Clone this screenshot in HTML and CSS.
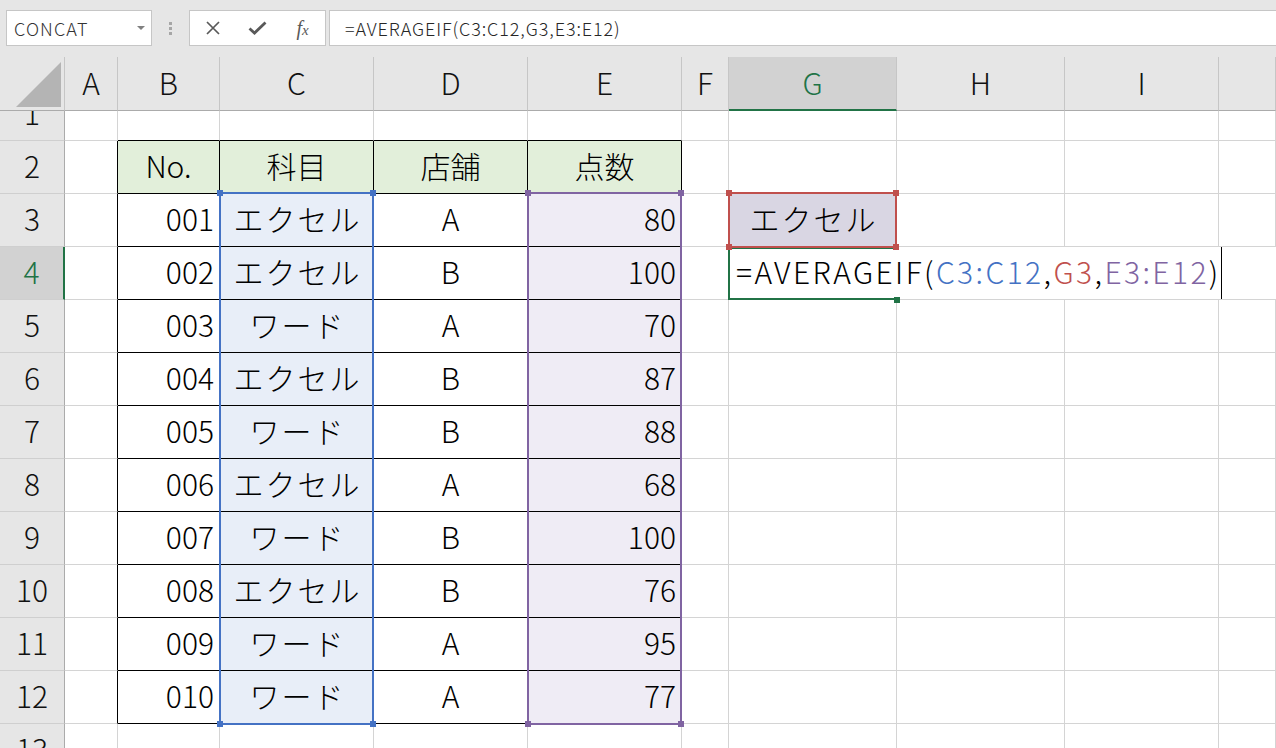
FILE: index.html
```html
<!DOCTYPE html>
<html lang="ja">
<head>
<meta charset="utf-8">
<title>AVERAGEIF</title>
<link rel="stylesheet" href="styles.css">
</head>
<body>
<div class="topbar">
  <div class="namebox"><span>CONCAT</span><i class="arrow"></i></div>
  <div class="grip"><i></i><i></i><i></i></div>
  <div class="fbtns">
    <div class="fbtn"><svg width="16" height="16" viewBox="0 0 16 16"><path d="M2 2L14 14M14 2L2 14" stroke="#595959" stroke-width="1.7" fill="none"/></svg></div>
    <div class="fbtn"><svg width="19" height="14" viewBox="0 0 19 14"><path d="M1.5 7.5L6.5 12L17.5 1.5" stroke="#595959" stroke-width="2.8" fill="none"/></svg></div>
    <div class="fbtn fx"><span class="ff">f</span><span class="fxx">x</span></div>
  </div>
  <div class="finput">=AVERAGEIF(C3:C12,G3,E3:E12)</div>
</div>

<div class="colhdr">
  <div class="ch corner"><svg width="64" height="53" viewBox="0 0 64 53"><polygon points="16,50 61,50 61,5" fill="#b4b4b4"/></svg></div>
  <div class="ch">A</div>
  <div class="ch">B</div>
  <div class="ch">C</div>
  <div class="ch">D</div>
  <div class="ch">E</div>
  <div class="ch">F</div>
  <div class="ch sel">G</div>
  <div class="ch">H</div>
  <div class="ch">I</div>
  <div class="ch"></div>
</div>

<div class="sheet">
  <div class="rows">
    <div class="row">
      <div class="c rh">1</div><div class="c"></div><div class="c tt"></div><div class="c tt"></div><div class="c tt"></div><div class="c tt"></div><div class="c"></div><div class="c"></div><div class="c"></div><div class="c"></div><div class="c"></div>
    </div>
    <div class="row">
      <div class="c rh">2</div><div class="c tl"></div><div class="c t hd">No.</div><div class="c t hd">科目</div><div class="c t hd">店舗</div><div class="c t hd">点数</div><div class="c"></div><div class="c"></div><div class="c"></div><div class="c"></div><div class="c"></div>
    </div>
    <div class="row">
      <div class="c rh">3</div><div class="c tl"></div><div class="c t r">001</div><div class="c t bl">エクセル</div><div class="c t">A</div><div class="c t r pu">80</div><div class="c"></div><div class="c g3">エクセル</div><div class="c"></div><div class="c"></div><div class="c"></div>
    </div>
    <div class="row">
      <div class="c rh act">4</div><div class="c tl"></div><div class="c t r">002</div><div class="c t bl">エクセル</div><div class="c t">B</div><div class="c t r pu">100</div><div class="c"></div>
      <div class="c edit"><span class="formula">=AVERAGEIF(<span class="fb">C3:C12</span>,<span class="fr">G3</span>,<span class="fp">E3:E12</span>)</span><i class="caret"></i></div>
    </div>
    <div class="row">
      <div class="c rh">5</div><div class="c tl"></div><div class="c t r">003</div><div class="c t bl">ワード</div><div class="c t">A</div><div class="c t r pu">70</div><div class="c"></div><div class="c"></div><div class="c"></div><div class="c"></div><div class="c"></div>
    </div>
    <div class="row">
      <div class="c rh">6</div><div class="c tl"></div><div class="c t r">004</div><div class="c t bl">エクセル</div><div class="c t">B</div><div class="c t r pu">87</div><div class="c"></div><div class="c"></div><div class="c"></div><div class="c"></div><div class="c"></div>
    </div>
    <div class="row">
      <div class="c rh">7</div><div class="c tl"></div><div class="c t r">005</div><div class="c t bl">ワード</div><div class="c t">B</div><div class="c t r pu">88</div><div class="c"></div><div class="c"></div><div class="c"></div><div class="c"></div><div class="c"></div>
    </div>
    <div class="row">
      <div class="c rh">8</div><div class="c tl"></div><div class="c t r">006</div><div class="c t bl">エクセル</div><div class="c t">A</div><div class="c t r pu">68</div><div class="c"></div><div class="c"></div><div class="c"></div><div class="c"></div><div class="c"></div>
    </div>
    <div class="row">
      <div class="c rh">9</div><div class="c tl"></div><div class="c t r">007</div><div class="c t bl">ワード</div><div class="c t">B</div><div class="c t r pu">100</div><div class="c"></div><div class="c"></div><div class="c"></div><div class="c"></div><div class="c"></div>
    </div>
    <div class="row">
      <div class="c rh">10</div><div class="c tl"></div><div class="c t r">008</div><div class="c t bl">エクセル</div><div class="c t">B</div><div class="c t r pu">76</div><div class="c"></div><div class="c"></div><div class="c"></div><div class="c"></div><div class="c"></div>
    </div>
    <div class="row">
      <div class="c rh">11</div><div class="c tl"></div><div class="c t r">009</div><div class="c t bl">ワード</div><div class="c t">A</div><div class="c t r pu">95</div><div class="c"></div><div class="c"></div><div class="c"></div><div class="c"></div><div class="c"></div>
    </div>
    <div class="row">
      <div class="c rh">12</div><div class="c tl"></div><div class="c t r">010</div><div class="c t bl">ワード</div><div class="c t">A</div><div class="c t r pu">77</div><div class="c"></div><div class="c"></div><div class="c"></div><div class="c"></div><div class="c"></div>
    </div>
    <div class="row">
      <div class="c rh">13</div><div class="c"></div><div class="c"></div><div class="c"></div><div class="c"></div><div class="c"></div><div class="c"></div><div class="c"></div><div class="c"></div><div class="c"></div><div class="c"></div>
    </div>
  </div>

  <div class="rng rng-c"><i class="h tl"></i><i class="h tr"></i><i class="h bl"></i><i class="h br"></i></div>
  <div class="rng rng-e"><i class="h tl"></i><i class="h tr"></i><i class="h bl"></i><i class="h br"></i></div>
  <div class="rng active"><i class="h fill"></i></div>
  <div class="rng rng-g"><i class="h tl"></i><i class="h tr"></i><i class="h bl"></i><i class="h br"></i></div>
</div>
</body>
</html>
```

FILE: styles.css
```css
* { box-sizing: border-box; margin: 0; padding: 0; }
html, body { width: 1276px; height: 748px; overflow: hidden; }
body {
  font-family: "Noto Sans CJK JP", "Noto Sans", sans-serif;
  background: #fff;
  color: #000;
  --cols: 65px 53px 102px 154px 154px 154px 47px 168px 168px 154px 1fr;
}
i { display: block; font-style: normal; }

/* formula bar */
.topbar {
  height: 57px;
  background: #e6e6e6;
  display: flex;
  align-items: flex-start;
  padding-top: 10px;
}
.namebox {
  margin-left: 6px;
  width: 146px;
  height: 36px;
  background: #fff;
  border: 1px solid #c6c6c6;
  display: flex;
  align-items: center;
  justify-content: space-between;
  padding: 0 6px 0 7px;
  font-size: 18px;
  font-weight: 300;
  letter-spacing: 1.1px;
  color: #333;
}
.arrow {
  width: 0; height: 0;
  border-left: 4px solid transparent;
  border-right: 4px solid transparent;
  border-top: 4px solid #808080;
}
.grip {
  width: 37px;
  height: 36px;
  display: flex;
  flex-direction: column;
  align-items: center;
  justify-content: center;
  gap: 2px;
}
.grip i { width: 3px; height: 3px; background: #a6a6a6; }
.fbtns {
  width: 137px;
  height: 36px;
  background: #fff;
  border: 1px solid #c6c6c6;
  display: flex;
  align-items: center;
}
.fbtn { width: 45px; height: 34px; display: flex; align-items: center; justify-content: center; }
.fx { font-family: "Liberation Serif", serif; font-style: italic; color: #595959; align-items: center; }
.ff { font-size: 20px; }
.fxx { font-size: 15px; margin-top: 5px; }
.finput {
  flex: 1;
  margin-left: 3px;
  margin-right: -2px;
  height: 36px;
  background: #fff;
  border: 1px solid #c6c6c6;
  display: flex;
  align-items: center;
  padding-left: 15px;
  font-size: 18px;
  font-weight: 300;
  letter-spacing: 0.9px;
  color: #262626;
}

/* column header */
.colhdr { display: grid; grid-template-columns: var(--cols); height: 54px; }
.ch {
  background: #e6e6e6;
  border-right: 1px solid #c6c6c6;
  border-bottom: 1px solid #ababab;
  display: flex;
  align-items: center;
  justify-content: center;
  padding-bottom: 3px;
  font-size: 30px;
  font-weight: 300;
  line-height: 1;
  color: #111;
}
.ch.sel { background: #d2d2d2; border-bottom: 2px solid #217346; color: #217346; }
.ch.corner { padding-bottom: 0; }
.corner svg { display: block; }

/* sheet */
.sheet { position: relative; height: 637px; overflow: hidden; }
.rows { margin-top: -23px; }
.row { display: grid; grid-template-columns: var(--cols); height: 53px; }
.c {
  border-right: 1px solid #d4d4d4;
  border-bottom: 1px solid #d4d4d4;
  display: flex;
  align-items: center;
  justify-content: center;
  padding-bottom: 4px;
  font-size: 30px;
  font-weight: 300;
  line-height: 1;
  white-space: nowrap;
  color: #000;
}
.rh { background: #e6e6e6; border-right-color: #ababab; border-bottom-color: #cfcfcf; color: #111; }
.rh.act { background: #d2d2d2; border-right: 2px solid #217346; color: #217346; }
.tt { border-bottom-color: #000; }
.tl { border-right-color: #000; }
.t { border-right-color: #000; border-bottom-color: #000; }
.hd { background: #e2efda; }
.r { justify-content: flex-end; padding-right: 5px; }
.bl { background: #e8eef8; letter-spacing: 2px; padding-left: 2px; }
.pu { background: #efecf5; }
.g3 { background: #d9d6e3; letter-spacing: 2px; padding-left: 2px; }
.edit {
  grid-column: 8 / -1;
  border-right: none;
  justify-content: flex-start;
  padding-left: 7px;
  padding-bottom: 0;
  background: #fff;
}
.formula { letter-spacing: 2.4px; padding-bottom: 4px; color: #000; }
.fb { color: #4472c4; }
.fr { color: #c0504d; }
.fp { color: #8064a2; }
.caret { width: 1.5px; height: 52px; background: #000; }

/* range highlights */
.rng { position: absolute; border: 2px solid currentColor; }
.rng-c { left: 219px; top: 81px; width: 155px; height: 533px; color: #4472c4; }
.rng-e { left: 527px; top: 81px; width: 155px; height: 533px; color: #8064a2; }
.rng-g { left: 728px; top: 81px; width: 169px; height: 56px; color: #c0504d; }
.active { left: 728px; top: 136px; width: 169px; height: 53px; color: #217346; border-right: none; }
.h { position: absolute; width: 6px; height: 6px; background: currentColor; }
.h.tl { left: -4px; top: -4px; }
.h.tr { right: -4px; top: -4px; }
.h.bl { left: -4px; bottom: -4px; }
.h.br { right: -4px; bottom: -4px; }
.h.fill { right: -3px; bottom: -5px; }
```
